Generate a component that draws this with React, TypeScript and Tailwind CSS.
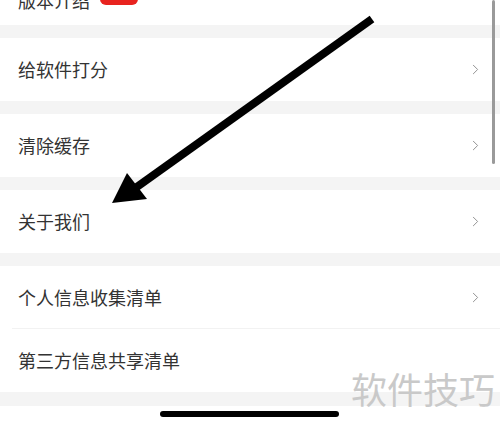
import { ChevronRight } from 'lucide-react'

const font = { fontFamily: '"Noto Sans CJK SC", "Noto Sans", sans-serif' }

function Row({ label, arrow = true, divider = false }: { label: string; arrow?: boolean; divider?: boolean }) {
  return (
    <div className="relative flex h-[63px] items-center justify-between bg-white pl-[18px] pr-[16px]">
      <span className="text-[18px] text-[#333]">{label}</span>
      {arrow && <ChevronRight className="h-[17px] w-[17px] text-[#8a8a8a]" strokeWidth={1.3} />}
      {divider && <div className="absolute bottom-0 left-[12px] right-0 h-px bg-[#f2f2f2]" />}
    </div>
  )
}

function Gap() {
  return <div className="h-[13px] bg-[#f4f4f4]" />
}

export default function App() {
  return (
    <div className="relative h-[427px] w-[500px] overflow-hidden bg-white" style={font}>
      <div className="flex flex-col">
        {/* first row is mostly scrolled off the top */}
        <div className="relative -mt-[25px] flex h-[50px] items-center bg-white pl-[18px]">
          <span className="text-[18px] text-[#333]">版本介绍</span>
          <div className="absolute left-[100px] top-[12px] h-[18px] w-[38px] rounded-[6px] bg-[#e8231f]" />
        </div>
        <Gap />
        <Row label="给软件打分" />
        <Gap />
        <Row label="清除缓存" />
        <Gap />
        <Row label="关于我们" />
        <Gap />
        <Row label="个人信息收集清单" divider />
        <Row label="第三方信息共享清单" arrow={false} />
        <div className="h-[14px] bg-[#f4f4f4]" />
        <div className="h-[20px] bg-white" />
      </div>

      {/* scrollbar */}
      <div className="absolute right-[5px] top-0 h-[164px] w-[3px] rounded-full bg-[#9a9a9a]" />

      {/* annotation arrow */}
      <svg className="absolute left-0 top-0" width="500" height="427" viewBox="0 0 500 427">
        <line x1="372" y1="19" x2="134" y2="189" stroke="#000" strokeWidth="8" strokeLinecap="butt" />
        <polygon points="112,203 127,173 147,199" fill="#000" />
      </svg>

      {/* watermark */}
      <div className="absolute right-[5px] top-[370px] text-[36px] leading-none text-[#c9c9c9]">软件技巧</div>

      {/* home indicator */}
      <div className="absolute left-[160px] top-[411px] h-[6px] w-[179px] rounded-full bg-black" />
    </div>
  )
}
